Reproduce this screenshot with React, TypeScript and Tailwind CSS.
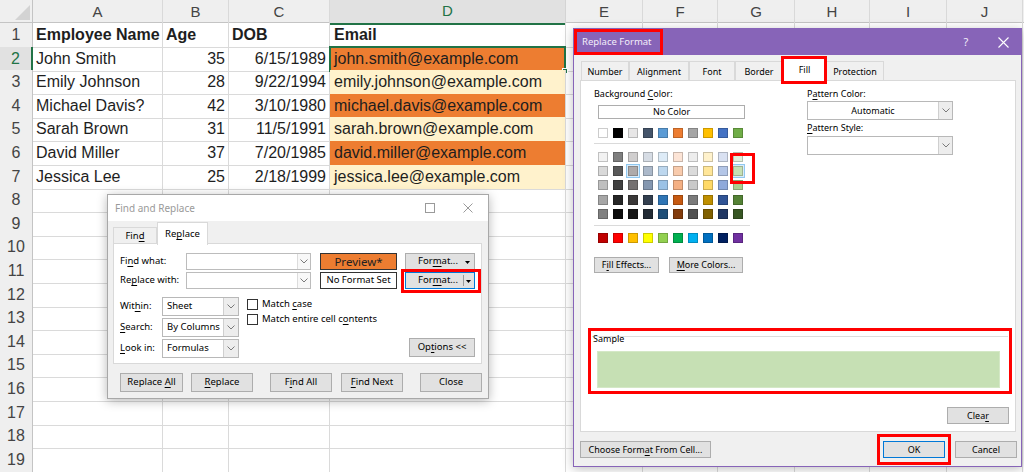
import React from "react";

const COLS =
  "grid grid-cols-[33px_130px_66px_101px_236px_77px_75px_77px_75px_77px_76px_1fr]";

const people = [
  ["John Smith", "35", "6/15/1989", "john.smith@example.com"],
  ["Emily Johnson", "28", "9/22/1994", "emily.johnson@example.com"],
  ["Michael Davis?", "42", "3/10/1980", "michael.davis@example.com"],
  ["Sarah Brown", "31", "11/5/1991", "sarah.brown@example.com"],
  ["David Miller", "37", "7/20/1985", "david.miller@example.com"],
  ["Jessica Lee", "25", "2/18/1999", "jessica.lee@example.com"],
];

const themeRow = ["#ffffff", "#000000", "#e7e6e6", "#44546a", "#5b9bd5", "#ed7d31", "#a5a5a5", "#ffc000", "#4472c4", "#70ad47"];
const tints = [
  ["#f2f2f2", "#7f7f7f", "#d0cece", "#d6dce4", "#ddebf7", "#fce4d6", "#ededed", "#fff2cc", "#d9e1f2", "#e2efda"],
  ["#d9d9d9", "#595959", "#aeaaaa", "#acb9ca", "#bdd7ee", "#f8cbad", "#dbdbdb", "#ffe699", "#b4c6e7", "#c6e0b4"],
  ["#bfbfbf", "#404040", "#757171", "#8497b0", "#9bc2e6", "#f4b084", "#c9c9c9", "#ffd966", "#8ea9db", "#a9d08e"],
  ["#a6a6a6", "#262626", "#3a3838", "#333f4f", "#2f75b5", "#c65911", "#7b7b7b", "#bf8f00", "#305496", "#548235"],
  ["#808080", "#0d0d0d", "#161616", "#222b35", "#1f4e78", "#833c0c", "#525252", "#806000", "#203764", "#375623"],
];
const standard = ["#c00000", "#ff0000", "#ffc000", "#ffff00", "#92d050", "#00b050", "#00b0f0", "#0070c0", "#002060", "#7030a0"];

function U({ children }: { children: React.ReactNode }) {
  return <span className="underline underline-offset-[1.5px]">{children}</span>;
}

function Chevron() {
  return (
    <svg width="8" height="5" viewBox="0 0 8 5">
      <polyline points="0.5,0.5 4,4 7.5,0.5" fill="none" stroke="#7a7a7a" strokeWidth="1" />
    </svg>
  );
}

function DownTri() {
  return (
    <svg width="5" height="3" viewBox="0 0 5 3">
      <polygon points="0,0 5,0 2.5,3" fill="#000" />
    </svg>
  );
}

function Btn({
  className = "",
  focus = false,
  children,
}: {
  className?: string;
  focus?: boolean;
  children: React.ReactNode;
}) {
  return (
    <div
      className={`flex items-center justify-center h-full bg-[#e1e1e1] border ${
        focus ? "border-[#0078d7]" : "border-[#adadad]"
      } ${className}`}
    >
      <span className="whitespace-nowrap">{children}</span>
    </div>
  );
}

function Combo({ className = "" }: { className?: string }) {
  return (
    <div className={`flex h-full bg-white border border-[#bcbcbc] ${className}`}>
      <div className="flex-1" />
      <div className="w-[13px] flex items-center justify-center border-l border-[#dcdcdc] bg-[#f8f8f8]">
        <Chevron />
      </div>
    </div>
  );
}

function Select({ className = "", children }: { className?: string; children?: React.ReactNode }) {
  return (
    <div className={`flex h-full bg-white border border-[#b8b8b8] ${className}`}>
      <div className="flex-1 flex items-center pl-[4px]">{children}</div>
      <div className="w-[15px] flex items-center justify-center border-l border-[#cfcfcf] bg-[#ededed]">
        <Chevron />
      </div>
    </div>
  );
}

function Sheet() {
  const letters = ["A", "B", "C", "D", "E", "F", "G", "H", "I", "J"];
  return (
    <div className="flex flex-col font-['Liberation_Sans',Arial,sans-serif] text-[#1e1e1e]">
      <div className={`${COLS} h-[23px] bg-[#efefef] border-b border-[#c4c4c4] text-[15px] text-[#444]`}>
        <div className="relative border-r border-[#c4c4c4]">
          <svg className="absolute left-0 top-0" width="33" height="22">
            <polygon points="15,20 30,5 30,20" fill="#d3d3d3" />
          </svg>
        </div>
        {letters.map((l) =>
          l === "D" ? (
            <div
              key={l}
              className="flex items-center justify-center bg-[#e1e1e1] text-[#217346] border-r border-[#d4d4d4] border-b-2 border-b-[#217346]"
            >
              {l}
            </div>
          ) : (
            <div key={l} className="flex items-center justify-center border-r border-[#d9d9d9]">
              {l}
            </div>
          )
        )}
        <div />
      </div>
      {Array.from({ length: 19 }, (_, i) => {
        const r = i + 1;
        const data = r >= 2 && r <= 7 ? people[r - 2] : null;
        const cell = "border-r border-b border-[#dadada] flex items-center whitespace-nowrap overflow-hidden";
        return (
          <div key={r} className={`${COLS} h-[23.6px] text-[16px]`}>
            {r === 2 ? (
              <div className="flex items-center justify-center bg-[#e1e1e1] text-[#217346] border-r-2 border-[#217346] border-b border-b-[#d4d4d4]">
                {r}
              </div>
            ) : (
              <div className="flex items-center justify-center bg-[#efefef] text-[#444] border-r border-[#c4c4c4] border-b border-b-[#dadada]">
                {r}
              </div>
            )}
            {r === 1 ? (
              <>
                <div className={`${cell} pl-[3px] font-bold`}>Employee Name</div>
                <div className={`${cell} pl-[3px] font-bold`}>Age</div>
                <div className={`${cell} pl-[3px] font-bold`}>DOB</div>
                <div className={`${cell} pl-[4px] font-bold`}>Email</div>
              </>
            ) : data ? (
              <>
                <div className={`${cell} pl-[3px]`}>{data[0]}</div>
                <div className={`${cell} justify-end pr-[3px]`}>{data[1]}</div>
                <div className={`${cell} justify-end pr-[3px]`}>{data[2]}</div>
                <div
                  className={`${cell} relative overflow-visible pl-[4px] ${
                    r % 2 === 0 ? "bg-[#ed7d31]" : "bg-[#fff2cc]"
                  }`}
                >
                  {data[3]}
                  {r === 2 && (
                    <div className="absolute -left-[1px] -top-[1px] -right-[1px] -bottom-[1px] border-2 border-[#217346]">
                      <div className="absolute -right-[4px] -bottom-[4px] w-[6px] h-[6px] bg-[#217346] border border-white" />
                    </div>
                  )}
                </div>
              </>
            ) : (
              <>
                <div className={cell} />
                <div className={cell} />
                <div className={cell} />
                <div className={cell} />
              </>
            )}
            {Array.from({ length: 6 }, (_, j) => (
              <div key={j} className={cell} />
            ))}
            <div />
          </div>
        );
      })}
    </div>
  );
}

function FindReplace() {
  return (
    <div className="absolute left-[107px] top-[194px] w-[382px] h-[205px] bg-[#f0f0f0] border border-[#a8a8a8] shadow-[0_2px_10px_rgba(0,0,0,0.28)] font-['Noto_Sans',sans-serif] text-[9.5px] text-black flex flex-col">
      <div className="h-[26px] bg-white flex items-center">
        <span className="pl-[7px] text-[#9a9a9a] text-[10px]">Find and Replace</span>
        <div className="ml-auto flex h-full">
          <div className="w-[38px] flex items-center justify-center">
            <svg width="10" height="10" viewBox="0 0 10 10">
              <rect x="0.5" y="0.5" width="9" height="9" fill="none" stroke="#9a9a9a" />
            </svg>
          </div>
          <div className="w-[38px] mr-[1px] flex items-center justify-center">
            <svg width="10" height="10" viewBox="0 0 10 10">
              <path d="M0.5 0.5 L9.5 9.5 M9.5 0.5 L0.5 9.5" stroke="#9a9a9a" strokeWidth="1" />
            </svg>
          </div>
        </div>
      </div>
      <div className="px-[5px] pt-[1px] flex flex-col">
        <div className="flex items-end h-[22px]">
          <div className="w-[44px] h-[17px] border border-b-0 border-[#d9d9d9] flex items-center justify-center">
            <span>
              Fin<U>d</U>
            </span>
          </div>
          <div className="relative z-10 w-[51px] h-[23px] -mb-px bg-white border border-b-0 border-[#d9d9d9] flex items-center justify-center">
            <span>
              Re<U>p</U>lace
            </span>
          </div>
        </div>
        <div className="relative -mt-px w-[369px] h-[121px] bg-white border border-[#d9d9d9] pt-[9px] pl-[6px] pr-[6px] flex flex-col">
          <div className="flex h-[17px] items-center">
            <div className="w-[66px]">
              Fi<U>n</U>d what:
            </div>
            <Combo className="w-[125px]" />
            <div className="ml-[9px] w-[77px] h-full bg-[#ed7d31] border border-[#333] flex items-center justify-center text-[11.5px] text-[#222]">
              Preview*
            </div>
            <Btn className="relative ml-[8px] w-[70px]">
              <span className="mr-[4px]">
                For<U>m</U>at...
              </span>
              <span className="absolute right-[4px] top-[7px] flex">
                <DownTri />
              </span>
            </Btn>
          </div>
          <div className="flex h-[17px] items-center mt-[2px]">
            <div className="w-[66px]">
              Re<U>p</U>lace with:
            </div>
            <Combo className="w-[125px]" />
            <div className="ml-[9px] w-[77px] h-full bg-white border border-[#333] flex items-center justify-center">
              No Format Set
            </div>
            <div className="relative ml-[8px] w-[70px] h-full">
              <Btn focus className="relative w-full">
                <span className="mr-[4px]">
                  For<U>m</U>at...
                </span>
                <span className="absolute right-[10px] top-[2px] bottom-[2px] w-px bg-[#9a9a9a]" />
                <span className="absolute right-[3px] top-[7px] flex">
                  <DownTri />
                </span>
              </Btn>
              <div className="absolute -left-[4px] -top-[3px] -right-[6px] -bottom-[4px] border-[3px] border-[#ff0000]" />
            </div>
          </div>
          <div className="flex mt-[8px]">
            <div className="flex flex-col gap-[2px]">
              <div className="flex h-[19px] items-center">
                <div className="w-[42px]">
                  Wit<U>h</U>in:
                </div>
                <Select className="w-[77px]">Sheet</Select>
              </div>
              <div className="flex h-[19px] items-center">
                <div className="w-[42px]">
                  <U>S</U>earch:
                </div>
                <Select className="w-[77px]">By Columns</Select>
              </div>
              <div className="flex h-[19px] items-center">
                <div className="w-[42px]">
                  <U>L</U>ook in:
                </div>
                <Select className="w-[77px]">Formulas</Select>
              </div>
            </div>
            <div className="ml-[8px] pt-[2px] flex flex-col gap-[4px]">
              <div className="flex items-center h-[11px]">
                <div className="w-[11px] h-[11px] bg-white border border-[#333]" />
                <span className="ml-[4px]">
                  Match <U>c</U>ase
                </span>
              </div>
              <div className="flex items-center h-[11px]">
                <div className="w-[11px] h-[11px] bg-white border border-[#333]" />
                <span className="ml-[4px]">
                  Match entire cell c<U>o</U>ntents
                </span>
              </div>
            </div>
            <div className="ml-auto self-end mb-[1px] h-[19px]">
              <Btn className="w-[66px]">
                Op<U>t</U>ions &lt;&lt;
              </Btn>
            </div>
          </div>
        </div>
        <div className="flex h-[19px] mt-[9px] ml-[7px]">
          <Btn className="w-[63px]">
            Replace <U>A</U>ll
          </Btn>
          <Btn className="ml-[8px] w-[62px]">
            <U>R</U>eplace
          </Btn>
          <Btn className="ml-[17px] w-[62px]">
            F<U>i</U>nd All
          </Btn>
          <Btn className="ml-[9px] w-[62px]">
            <U>F</U>ind Next
          </Btn>
          <Btn className="ml-[17px] w-[62px]">Close</Btn>
        </div>
      </div>
    </div>
  );
}

function Swatch({ c, hl = false }: { c: string; hl?: boolean }) {
  return (
    <div className="relative w-[10px] h-[10px]">
      {hl && <div className="absolute -inset-[2px] border border-[#90c8f0] bg-[#d8ecfb]" />}
      <div className="absolute inset-0 border border-black/20" style={{ backgroundColor: c }} />
    </div>
  );
}

function ReplaceFormat() {
  const tabs: [string, string][] = [
    ["Number", "w-[48px]"],
    ["Alignment", "w-[60px]"],
    ["Font", "w-[46px]"],
    ["Border", "w-[48px]"],
  ];
  return (
    <div className="absolute left-[573px] top-[28px] w-[449px] h-[439px] bg-[#f0f0f0] border border-[#8764b8] shadow-[0_2px_10px_rgba(0,0,0,0.25)] font-['Noto_Sans',sans-serif] text-[9px] text-black flex flex-col">
      <div className="h-[26px] bg-[#8764b8] flex items-stretch text-white">
        <div className="w-[89px] border-[3px] border-[#ff0000] flex items-center pl-[5px] text-[9.5px] text-[#f3eefa] whitespace-nowrap">
          Replace Format
        </div>
        <div className="ml-auto w-[38px] flex items-center justify-center text-[11px] text-[#f3eefa]">?</div>
        <div className="w-[36px] flex items-center justify-center">
          <svg width="11" height="11" viewBox="0 0 11 11">
            <path d="M0.5 0.5 L10.5 10.5 M10.5 0.5 L0.5 10.5" stroke="#ffffff" strokeWidth="1.1" />
          </svg>
        </div>
      </div>
      <div className="flex items-end h-[26px] pl-[7px]">
        {tabs.map(([t, w]) => (
          <div
            key={t}
            className={`${w} h-[20px] border border-b-0 border-[#d9d9d9] flex items-center justify-center`}
          >
            {t}
          </div>
        ))}
        <div className="relative z-10 w-[43px] h-[25px] -mb-px bg-white border border-b-0 border-[#d9d9d9] flex items-center justify-center">
          Fill
          <div className="absolute -left-[3px] -top-[2px] -right-[2px] -bottom-[2px] border-[3px] border-[#ff0000]" />
        </div>
        <div className="w-[58px] h-[20px] border border-b-0 border-[#d9d9d9] flex items-center justify-center">
          Protection
        </div>
      </div>
      <div className="relative -mt-px ml-[6px] w-[436px] h-[352px] bg-white border border-[#d9d9d9] flex flex-col">
        <div className="flex">
          <div className="pl-[13px] w-[226px] flex flex-col">
            <div className="mt-[7px] h-[12px] leading-[12px]">
              Background <U>C</U>olor:
            </div>
            <div className="ml-[4px] mt-[5px] w-[147px] h-[14px] bg-white border border-[#adadad] flex items-center justify-center">
              No Color
            </div>
            <div className="ml-[4px] mt-[9px] flex gap-[5px]">
              {themeRow.map((c) => (
                <Swatch key={c} c={c} />
              ))}
            </div>
            <div className="mt-[5px] h-px w-[156px] bg-[#dadada]" />
            <div className="relative ml-[4px] mt-[7.7px] flex flex-col gap-[4.4px]">
              {tints.map((row, ri) => (
                <div key={ri} className="flex gap-[5px]">
                  {row.map((c, ci) => (
                    <Swatch key={ci} c={c} hl={ri === 1 && (ci === 2 || ci === 9)} />
                  ))}
                </div>
              ))}
              <div className="absolute left-[132px] top-[1.5px] w-[25px] h-[31px] border-[3px] border-[#ff0000]" />
            </div>
            <div className="mt-[5.7px] h-px w-[156px] bg-[#dadada]" />
            <div className="ml-[4px] mt-[7px] flex gap-[5px]">
              {standard.map((c) => (
                <Swatch key={c} c={c} />
              ))}
            </div>
            <div className="mt-[14px] flex h-[16px]">
              <Btn className="w-[65px]">
                F<U>i</U>ll Effects...
              </Btn>
              <Btn className="ml-[10px] w-[74px]">
                <U>M</U>ore Colors...
              </Btn>
            </div>
          </div>
          <div className="w-[146px] flex flex-col">
            <div className="mt-[7px] h-[12px] leading-[12px]">
              P<U>a</U>ttern Color:
            </div>
            <div className="mt-[1px] h-[19px]">
              <div className="flex h-full bg-white border border-[#b8b8b8]">
                <div className="flex-1 flex items-center justify-center">Automatic</div>
                <div className="w-[14px] flex items-center justify-center border-l border-[#cfcfcf] bg-[#ededed]">
                  <Chevron />
                </div>
              </div>
            </div>
            <div className="mt-[2px] h-[12px] leading-[12px]">
              <U>P</U>attern Style:
            </div>
            <div className="mt-[2px] h-[19px]">
              <div className="flex h-full bg-white border border-[#b8b8b8]">
                <div className="flex-1" />
                <div className="w-[14px] flex items-center justify-center border-l border-[#cfcfcf] bg-[#ededed]">
                  <Chevron />
                </div>
              </div>
            </div>
          </div>
        </div>
        <div className="ml-[7px] mt-[55px] w-[424px] h-[66px] border-[3px] border-[#ff0000] flex flex-col">
          <div className="mt-[5px] mx-[1px] border-t border-[#dcdcdc]" />
          <div className="-mt-[4px] ml-[2px] h-[12px] leading-[12px]">Sample</div>
          <div className="ml-[6px] mt-[6px] w-[403px] h-[37px] bg-[#c6e0b4] border border-[#d4e8c6]" />
        </div>
        <div className="mt-[13px] self-end mr-[6px] h-[17px]">
          <Btn className="w-[62px]">
            Clea<U>r</U>
          </Btn>
        </div>
      </div>
      <div className="mt-[9px] flex h-[17px] pl-[6px] pr-[4px]">
        <Btn className="w-[131px]">
          Choose Form<U>a</U>t From Cell...
        </Btn>
        <div className="relative ml-auto w-[62px] h-full">
          <Btn focus className="w-full">
            OK
          </Btn>
          <div className="absolute -left-[6px] -top-[7px] -right-[6px] -bottom-[7px] border-[3px] border-[#ff0000]" />
        </div>
        <Btn className="ml-[10px] w-[62px]">Cancel</Btn>
      </div>
    </div>
  );
}

export default function App() {
  return (
    <div className="relative w-[1024px] h-[472px] overflow-hidden bg-white">
      <Sheet />
      <FindReplace />
      <ReplaceFormat />
    </div>
  );
}
